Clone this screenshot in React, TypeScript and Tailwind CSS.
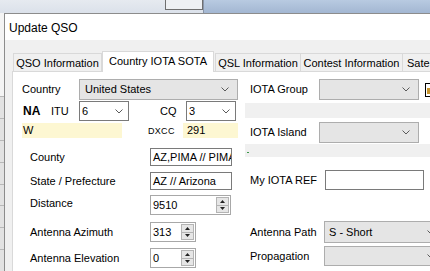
import React from "react";

const Chevron = () => (
  <svg width="8" height="5" viewBox="0 0 8 5" className="shrink-0">
    <path d="M0.5 0.5 L4 4 L7.5 0.5" fill="none" stroke="#5a5a5a" strokeWidth="1" />
  </svg>
);

const Arrow = ({ up }: { up?: boolean }) => (
  <svg width="5" height="3" viewBox="0 0 5 3">
    <path d={up ? "M0 3 L2.5 0 L5 3Z" : "M0 0 L2.5 3 L5 0Z"} fill="#222" />
  </svg>
);

const Spin = () => (
  <div className="flex h-[16px] w-[13px] shrink-0 flex-col border border-[#b4b4b4] bg-[#e6e6e6]">
    <div className="flex flex-1 items-center justify-center border-b border-[#b4b4b4]">
      <Arrow up />
    </div>
    <div className="flex flex-1 items-center justify-center">
      <Arrow />
    </div>
  </div>
);

function Drop({ value = "", className }: { value?: string; className: string }) {
  return (
    <div className={`flex shrink-0 items-center justify-between border border-[#adadad] bg-[#e5e5e5] pl-[4px] pr-[8px] ${className}`}>
      <span>{value}</span>
      <Chevron />
    </div>
  );
}

function Combo({ value, className }: { value: string; className: string }) {
  return (
    <div className={`flex shrink-0 items-center justify-between border border-[#7a7a7a] bg-white pl-[2px] pr-[5px] ${className}`}>
      <span>{value}</span>
      <Chevron />
    </div>
  );
}

function Field({ value = "", className }: { value?: string; className: string }) {
  return (
    <div className={`flex shrink-0 items-center overflow-hidden whitespace-nowrap border border-[#7a7a7a] bg-white pl-[2px] ${className}`}>
      {value}
    </div>
  );
}

function SpinField({ value, className }: { value: string; className: string }) {
  return (
    <div className={`flex shrink-0 items-center justify-between border border-[#a8a8a8] bg-white pl-[2px] pr-[1px] ${className}`}>
      <span>{value}</span>
      <Spin />
    </div>
  );
}

const Tab = ({ label, className }: { label: string; className: string }) => (
  <div className={`flex h-[18px] shrink-0 items-center justify-center border-l border-r border-t border-[#d9d9d9] bg-[#f0f0f0] ${className}`}>
    {label}
  </div>
);

export default function App() {
  return (
    <div className="flex h-[271px] w-[430px] flex-col overflow-hidden bg-white font-['Liberation_Sans',Arial,sans-serif] text-[11px] text-black">
      {/* window behind */}
      <div className="flex h-[13px] shrink-0">
        <div className="flex w-[203px] bg-gradient-to-b from-[#e6eaf0] to-[#dbe1ea]">
          <div className="ml-[165px] h-[10px] w-[38px] border-b border-l border-r border-[#6f6f6f] bg-[#eef0f3]" />
        </div>
        <div className="w-px bg-[#8a96a8]" />
        <div className="flex-1 bg-gradient-to-b from-[#b8cae1] to-[#a3b7d2]" />
      </div>

      <div className="flex min-h-0 flex-1">
        {/* left strip of window behind */}
        <div className="flex w-[4px] shrink-0 flex-col bg-[#e2e2e2]">
          <div className="h-[84px] bg-[#f4f4f4]" />
          <div className="h-[22px] border-t border-[#b8b8b8]" />
          <div className="h-[22px] border-t border-[#b8b8b8]" />
          <div className="h-[22px] border-t border-[#b8b8b8]" />
          <div className="h-[22px] border-t border-[#b8b8b8]" />
          <div className="h-[22px] border-t border-[#b8b8b8]" />
          <div className="h-[22px] border-t border-[#b8b8b8]" />
          <div className="h-[22px] border-t border-[#b8b8b8]" />
          <div className="h-[22px] border-t border-[#b8b8b8]" />
        </div>

        {/* dialog */}
        <div className="flex min-w-0 flex-1 flex-col border-l border-t border-[#8c8c8c]">
          <div className="flex h-[26px] shrink-0 items-center bg-white pl-[4px] pt-[1px] text-[12px]">Update QSO</div>

          <div className="flex flex-1 flex-col bg-[#f0f0f0] pl-[7px] pt-[11px]">
            {/* tabs */}
            <div className="relative z-10 ml-[1px] flex h-[20px] items-end">
              <Tab label="QSO Information" className="w-[89px] pt-[1px]" />
              <div className="-mb-px flex h-[21px] w-[112px] shrink-0 items-center justify-center border-l border-r border-t border-[#d9d9d9] bg-white pb-[2px]">
                Country IOTA SOTA
              </div>
              <Tab label="QSL Information" className="ml-px w-[86px] pt-[1px]" />
              <Tab label="Contest Information" className="-ml-px w-[103px] pt-[1px]" />
              <Tab label="Satellite" className="-ml-px w-[60px] justify-start pl-[4px] pt-[1px]" />
            </div>

            {/* page */}
            <div className="flex flex-1 border-l border-t border-[#d9d9d9] bg-white">
              {/* left column */}
              <div className="flex w-[232px] shrink-0 flex-col">
                <div className="mt-[7px] flex h-[21px] items-center">
                  <span className="w-[66px] shrink-0 pl-[9px]">Country</span>
                  <Drop value="United States" className="h-[21px] w-[159px] pl-[5px]" />
                </div>

                <div className="mt-px flex h-[20px] items-center">
                  <span className="w-[38px] shrink-0 pl-[10px] text-[12px] font-bold">NA</span>
                  <span className="w-[28px] shrink-0">ITU</span>
                  <Combo value="6" className="h-[20px] w-[50px]" />
                  <span className="ml-[31px] w-[26px] shrink-0">CQ</span>
                  <Combo value="3" className="h-[20px] w-[50px]" />
                </div>

                <div className="mt-[2px] flex h-[15px] items-center">
                  <div className="ml-[9px] flex h-[15px] w-[100px] shrink-0 items-center bg-[#fdf7d2] pl-[1px]">W</div>
                  <span className="ml-[26px] w-[35px] shrink-0 pt-[2px] text-[9px] tracking-[0.3px]">DXCC</span>
                  <div className="flex h-[15px] w-[55px] shrink-0 items-center bg-[#fdf7d2] pl-[4px]">291</div>
                </div>

                <div className="mt-[10px] flex h-[18px] items-center">
                  <span className="w-[137px] shrink-0 pl-[17px]">County</span>
                  <Field value="AZ,PIMA // PIMA" className="h-[18px] w-[82px]" />
                </div>

                <div className="mt-[6px] flex h-[18px] items-center">
                  <span className="w-[137px] shrink-0 pl-[17px]">State / Prefecture</span>
                  <Field value="AZ // Arizona" className="h-[18px] w-[82px]" />
                </div>

                <div className="mt-[5px] flex h-[20px] items-center">
                  <span className="w-[137px] shrink-0 pb-[3px] pl-[17px]">Distance</span>
                  <SpinField value="9510" className="h-[20px] w-[81px]" />
                </div>

                <div className="mt-[7px] flex h-[20px] items-center">
                  <span className="w-[137px] shrink-0 pl-[17px]">Antenna Azimuth</span>
                  <SpinField value="313" className="h-[20px] w-[46px]" />
                </div>

                <div className="mt-[6px] flex h-[20px] items-center">
                  <span className="w-[137px] shrink-0 pl-[17px]">Antenna Elevation</span>
                  <SpinField value="0" className="h-[20px] w-[46px]" />
                </div>
              </div>

              {/* right column */}
              <div className="flex min-w-0 flex-1 flex-col">
                <div className="mt-[7px] flex h-[21px] items-center">
                  <span className="w-[74px] shrink-0 pl-[5px]">IOTA Group</span>
                  <Drop className="h-[21px] w-[100px]" />
                  <div className="ml-[6px] flex h-[14px] w-[10px] shrink-0 items-end border border-black bg-white pb-[2px] pl-[1px]">
                    <div className="h-[6px] w-[3px] bg-[#c8962e]" />
                  </div>
                </div>

                <div className="mt-[3px] h-[15px] shrink-0 bg-[#f0f0f0]" />

                <div className="mt-[4px] flex h-[21px] items-center">
                  <span className="w-[74px] shrink-0 pl-[5px]">IOTA Island</span>
                  <Drop className="h-[21px] w-[100px]" />
                </div>

                <div className="mt-px flex h-[13px] shrink-0 items-center bg-[#f0f0f0] pl-[2px] pt-[3px]">
                  <div className="h-px w-[2px] bg-[#3c9a4a]" />
                </div>

                <div className="mt-[13px] flex h-[20px] items-center">
                  <span className="w-[80px] shrink-0 pl-[5px]">My IOTA REF</span>
                  <Field className="h-[20px] w-[99px]" />
                </div>

                <div className="mt-[31px] flex h-[22px] items-center">
                  <span className="w-[79px] shrink-0 pl-[5px]">Antenna Path</span>
                  <Drop value="S - Short" className="h-[22px] w-[120px]" />
                </div>

                <div className="mt-[3px] flex h-[20px] items-center">
                  <span className="w-[79px] shrink-0 pl-[5px]">Propagation</span>
                  <Drop className="h-[20px] w-[120px]" />
                </div>
              </div>
            </div>
          </div>
        </div>
      </div>
    </div>
  );
}
